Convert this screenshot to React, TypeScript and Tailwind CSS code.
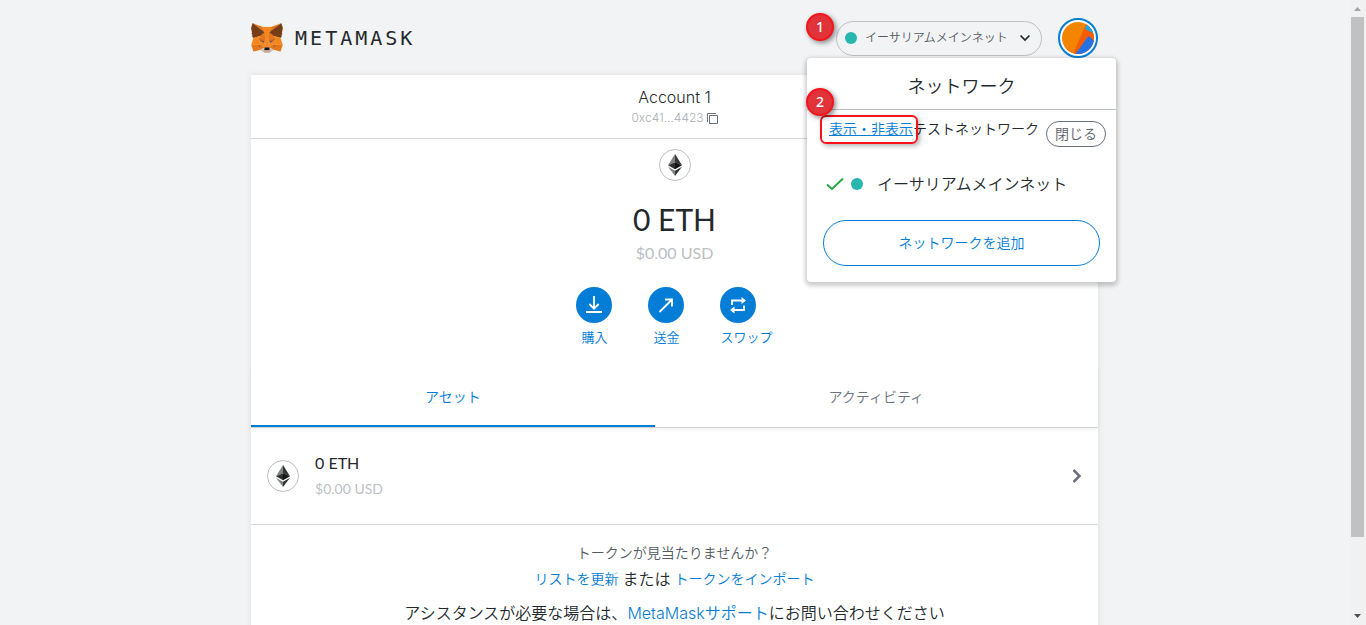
import type { ReactNode } from "react";

const FOX: [string, string][] = [
  ["#E2761B", "274.1,35.5 174.6,109.4 193,65.8"],
  ["#E4761B", "44.4,35.5 143.1,110.1 125.6,65.8"],
  ["#E4761B", "238.3,206.8 211.8,247.4 268.5,263 284.8,207.7"],
  ["#E4761B", "33.9,207.7 50.1,263 106.8,247.4 80.3,206.8"],
  ["#E4761B", "103.6,138.2 87.8,162.1 144.1,164.6 142.1,104.1"],
  ["#E4761B", "214.9,138.2 175.9,103.4 174.6,164.6 230.8,162.1"],
  ["#E4761B", "106.8,247.4 140.6,230.9 111.4,208.1"],
  ["#E4761B", "177.9,230.9 211.8,247.4 207.1,208.1"],
  ["#D7C1B3", "211.8,247.4 177.9,230.9 180.6,253 180.3,262.3"],
  ["#D7C1B3", "106.8,247.4 138.3,262.3 138.1,253 140.6,230.9"],
  ["#233447", "138.8,193.5 110.6,185.2 130.5,176.1"],
  ["#233447", "179.7,193.5 188,176.1 208,185.2"],
  ["#CD6116", "106.8,247.4 111.6,206.8 80.3,207.7"],
  ["#CD6116", "207,206.8 211.8,247.4 238.3,207.7"],
  ["#CD6116", "230.8,162.1 174.6,164.6 179.8,193.5 188.1,176.1 208.1,185.2"],
  ["#CD6116", "110.6,185.2 130.6,176.1 138.8,193.5 144.1,164.6 87.8,162.1"],
  ["#E4751F", "87.8,162.1 111.4,208.1 110.6,185.2"],
  ["#E4751F", "208.1,185.2 207.1,208.1 230.8,162.1"],
  ["#E4751F", "144.1,164.6 138.8,193.5 145.4,227.6 146.9,182.7"],
  ["#E4751F", "174.6,164.6 171.9,182.6 173.1,227.6 179.8,193.5"],
  ["#F6851B", "179.8,193.5 173.1,227.6 177.9,230.9 207.1,208.1 208.1,185.2"],
  ["#F6851B", "110.6,185.2 111.4,208.1 140.6,230.9 145.4,227.6 138.8,193.5"],
  ["#C0AD9E", "180.3,262.3 180.6,253 178.1,250.8 140.4,250.8 138.1,253 138.3,262.3 106.8,247.4 117.8,256.4 140.1,271.9 178.4,271.9 200.8,256.4 211.8,247.4"],
  ["#161616", "177.9,230.9 173.1,227.6 145.4,227.6 140.6,230.9 138.1,253 140.4,250.8 178.1,250.8 180.6,253"],
  ["#763D16", "278.3,114.2 286.8,73.4 274.1,35.5 177.9,106.9 214.9,138.2 267.2,153.5 278.8,140 273.8,136.4 281.8,129.1 275.6,124.3 283.6,118.2"],
  ["#763D16", "31.8,73.4 40.3,114.2 34.9,118.2 42.9,124.3 36.8,129.1 44.8,136.4 39.8,140 51.3,153.5 103.6,138.2 140.6,106.9 44.4,35.5"],
  ["#F6851B", "267.2,153.5 214.9,138.2 230.8,162.1 207.1,208.1 238.3,207.7 284.8,207.7"],
  ["#F6851B", "103.6,138.2 51.3,153.5 33.9,207.7 80.3,207.7 111.4,208.1 87.8,162.1"],
  ["#F6851B", "174.6,164.6 177.9,106.9 193.1,65.8 125.6,65.8 140.6,106.9 144.1,164.6 145.3,182.8 145.4,227.6 173.1,227.6 173.3,182.8"],
];

function FoxLogo() {
  return (
    <svg viewBox="31 35 257 238" className="h-[30px] w-8" aria-hidden="true">
      {FOX.map(([fill, points]) => (
        <polygon key={points} points={points} fill={fill} stroke={fill} strokeLinejoin="round" />
      ))}
    </svg>
  );
}

function EthIcon() {
  return (
    <span className="flex size-8 shrink-0 items-center justify-center rounded-full border border-[#bbc0c5] bg-white">
      <svg viewBox="0 0 14 22" className="h-[22px] w-3.5" aria-hidden="true">
        <path d="M7 0 0 11.2 7 8.2z" fill="#828384" />
        <path d="M7 0v8.2l7 3z" fill="#343535" />
        <path d="M0 11.2 7 8.2v7z" fill="#2f3030" />
        <path d="M14 11.2 7 8.2v7z" fill="#131313" />
        <path d="M0 12.8 7 16.8V22z" fill="#828384" />
        <path d="M14 12.8 7 16.8V22z" fill="#343535" />
      </svg>
    </span>
  );
}

function Avatar() {
  return (
    <button
      type="button"
      aria-label="アカウント"
      className="flex size-10 items-center justify-center rounded-full border-2 border-[#037dd6] bg-white"
    >
      <svg viewBox="0 0 32 32" className="size-8" aria-hidden="true">
        <clipPath id="avatar-clip">
          <circle cx="16" cy="16" r="16" />
        </clipPath>
        <g clipPath="url(#avatar-clip)">
          <rect width="32" height="32" fill="#f38500" />
          <path d="M25 0 11.300 31.300 0 23.500V32h32V0z" fill="#fa5b00" />
          <path d="M13 32.500 26.300 14 34 20v14z" fill="#2572e3" />
          <path d="M25.500 1 22.800 7l9.200 4.500L36 4z" fill="#18a8f0" />
        </g>
      </svg>
    </button>
  );
}

function Step({ children }: { children: ReactNode }) {
  return (
    <span className="flex size-7 items-center justify-center rounded-full border-2 border-[#f5141c] bg-[#e0343a] font-['Noto_Sans',sans-serif] text-sm font-medium text-white shadow-[2px_2px_5px_rgba(0,0,0,0.45)]">
      {children}
    </span>
  );
}

function Action({ label, children }: { label: string; children: ReactNode }) {
  return (
    <button type="button" className="text-[13px] leading-5 text-[#037dd6]">
      <span className="mb-1 flex size-9 items-center justify-center rounded-full bg-[#037dd6]">
        <svg
          viewBox="0 0 20 20"
          className="size-5"
          fill="none"
          stroke="white"
          strokeWidth="1.8"
          aria-hidden="true"
        >
          {children}
        </svg>
      </span>
      {label}
    </button>
  );
}

function NetworkMenu() {
  return (
    <section
      aria-label="ネットワーク"
      className="absolute top-[58px] -right-[18px] z-10 w-[309px] rounded bg-white pb-4 shadow-[0_2px_4px_2px_rgba(0,0,0,0.2)]"
    >
      <h2 className="border-b border-[#bbc0c5] pt-4 pb-[11px] text-center text-lg leading-6">
        ネットワーク
      </h2>
      <div className="relative flex items-start justify-between pt-[9px] pr-2.5 pl-[22px] text-sm leading-5">
        <p>
          <a href="#testnets" className="text-[#037dd6] underline">
            表示・非表示
          </a>
          テストネットワーク
        </p>
        <button type="button" className="mt-0.5 h-[26px] w-[60px] rounded-full border border-[#6a737d] text-[#5d6269]">
          閉じる
        </button>
        <span className="pointer-events-none absolute top-[5px] left-[13px] h-[29px] w-[98px] rounded-md border-2 border-[#f5141c] shadow-[2px_2px_5px_rgba(0,0,0,0.3)]" />
        <span className="absolute -top-[22px] -left-px">
          <Step>2</Step>
        </span>
      </div>
      <button type="button" className="mt-[25px] flex w-full items-center pl-[19px] text-base leading-6">
        <svg viewBox="0 0 18 14" className="h-3.5 w-[18px]" fill="none" stroke="#28a745" strokeWidth="2" aria-hidden="true">
          <path d="M1 7.5 6 12 17 1.5" />
        </svg>
        <span className="ml-[7px] size-3 rounded-full bg-[#29b6af]" />
        <span className="ml-3.5">イーサリアムメインネット</span>
      </button>
      <div className="px-4 pt-6">
        <button type="button" className="h-[46px] w-full rounded-full border border-[#037dd6] text-sm text-[#037dd6]">
          ネットワークを追加
        </button>
      </div>
    </section>
  );
}

function Scrollbar() {
  return (
    <div aria-hidden="true" className="flex w-[17px] shrink-0 flex-col items-center bg-[#f1f1f1]">
      <svg viewBox="0 0 17 17" className="size-[17px] shrink-0">
        <path d="M5 11h7L8.500 7z" fill="#a3a3a3" />
      </svg>
      <div className="w-[13px] grow-[88] bg-[#c1c1c1]" />
      <div className="grow-[12]" />
      <svg viewBox="0 0 17 17" className="size-[17px] shrink-0">
        <path d="M5 6h7l-3.500 4z" fill="#505050" />
      </svg>
    </div>
  );
}

export default function App() {
  return (
    <div className="flex h-screen overflow-hidden bg-[#f2f3f4] font-['Lato','Noto_Sans_CJK_JP',sans-serif] font-[350] text-[#24292e]">
      <div className="min-w-0 flex-1">
        <header className="relative mx-auto flex w-[62vw] items-center justify-between pt-[18px] pb-[17px]">
          <a href="#home" className="flex items-center gap-3">
            <FoxLogo />
            <span className="font-['DejaVu_Sans_Mono',monospace] text-xl tracking-[3px]">METAMASK</span>
          </a>
          <div className="relative flex items-center gap-4">
            <button
              type="button"
              className="flex h-[35px] w-[206px] items-center rounded-full border border-[#bbc0c5] px-2 text-xs text-[#535a61]"
            >
              <span className="size-3 rounded-full bg-[#29b6af]" />
              <span className="ml-2 flex-1 text-left">イーサリアムメインネット</span>
              <svg viewBox="0 0 16 16" className="size-4" fill="none" stroke="#24292e" strokeWidth="1.7" aria-hidden="true">
                <path d="m3.500 5.500 4.500 4.500 4.500-4.500" />
              </svg>
            </button>
            <Avatar />
            <span className="absolute -top-[5px] -left-[30px]">
              <Step>1</Step>
            </span>
          </div>
          <NetworkMenu />
        </header>

        <main className="mx-auto min-h-screen w-[62vw] bg-white shadow-[0_0_7px_rgba(0,0,0,0.08)]">
          <div className="flex flex-col items-center border-b border-[#d6d9dc] pt-3 pb-2.5 leading-5">
            <h1 className="mb-px font-['Inter',sans-serif] text-base leading-5 font-[350]">Account 1</h1>
            <button type="button" className="flex items-center gap-[3px] font-['Inter',sans-serif] text-xs leading-5 text-[#a9adb3]">
              0xc41...4423
              <svg viewBox="0 0 11 11" className="size-[11px]" fill="none" stroke="#6a737d" aria-hidden="true">
                <path d="M.5 9V.5H9M2.500 2.500h8v8h-8z" />
              </svg>
            </button>
          </div>

          <section className="flex flex-col items-center pt-2.5">
            <EthIcon />
            <p className="mt-[18px] text-3xl leading-10 font-normal">0 ETH</p>
            <p className="mt-0.5 text-base leading-6 font-normal text-[#bbc0c5]">$0.00 USD</p>
            <div className="mt-[22px] flex gap-9">
              <Action label="購入">
                <path d="M10 1v13M5.300 9l4.700 4.700L14.700 9M2 17h16" />
              </Action>
              <Action label="送金">
                <path d="M3.500 17 16 4.500M9 4.500h7v7" />
              </Action>
              <Action label="スワップ">
                <path d="M4 10V5.500h10M16 10.500V15H6" />
                <path d="m13.500 2 4.500 3.500L13.500 9zM6.500 11.500 2 15l4.500 3.500z" fill="white" stroke="none" />
              </Action>
            </div>
          </section>

          <div role="tablist" className="mt-5 flex border-b border-[#d0d3d6] text-sm leading-5 shadow-[0_2px_4px_rgba(0,0,0,0.05)]">
            <button role="tab" aria-selected="true" type="button" className="flex-auto border-b-2 border-[#037dd6] pt-5 pb-[18px] text-[#037dd6]">
              アセット
            </button>
            <button role="tab" aria-selected="false" type="button" className="flex-auto border-b-2 border-transparent pt-5 pb-[18px] text-[#6a737d]">
              アクティビティ
            </button>
          </div>

          <button type="button" className="flex w-full items-center gap-4 border-b border-[#d6d9dc] px-4 py-[25px] text-left">
            <EthIcon />
            <span className="flex flex-1 flex-col gap-1.5">
              <span className="text-base leading-5 font-normal">0 ETH</span>
              <span className="text-sm leading-5 font-normal text-[#bbc0c5]">$0.00 USD</span>
            </span>
            <svg viewBox="0 0 12 16" className="h-4 w-3" fill="none" stroke="#6a737d" strokeWidth="2.500" aria-hidden="true">
              <path d="m3.500 2 6 6-6 6" />
            </svg>
          </button>

          <footer className="pt-[18px] text-center text-base leading-6">
            <p className="text-sm leading-5 text-[#535a61]">トークンが見当たりませんか？</p>
            <p className="mt-1 flex justify-center gap-1">
              <a href="#refresh" className="text-sm leading-6 text-[#037dd6]">リストを更新</a>
              <span>または</span>
              <a href="#import" className="text-sm leading-6 text-[#037dd6]">トークンをインポート</a>
            </p>
            <p className="mt-2.5">
              アシスタンスが必要な場合は、
              <a href="#support" className="text-[#037dd6]">
                <span className="font-['Inter',sans-serif]">MetaMask</span>サポート
              </a>
              にお問い合わせください
            </p>
          </footer>
        </main>
      </div>
      <Scrollbar />
    </div>
  );
}
